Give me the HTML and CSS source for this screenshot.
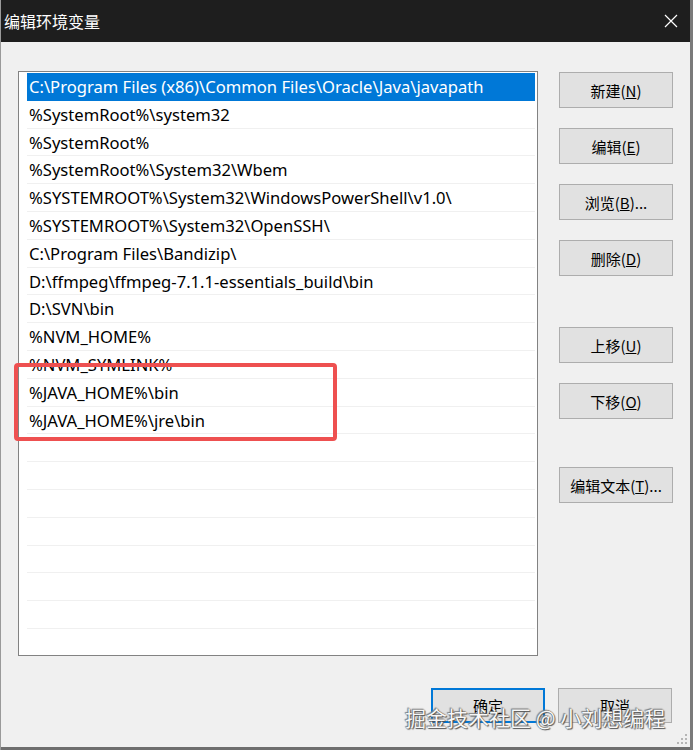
FILE: index.html
```html
<!DOCTYPE html>
<html lang="zh-CN">
  <head>
    <meta charset="UTF-8" />
    <meta name="viewport" content="width=device-width, initial-scale=1.0" />
    <title>编辑环境变量</title>
    <link rel="stylesheet" href="styles.css">
  </head>
  <body>
    <div class="window">
      <div class="titlebar">
        <span class="title">编辑环境变量</span>
        <span class="close">
          <svg width="14" height="14" viewBox="0 0 14 14">
            <path d="M1 1 L13 13 M13 1 L1 13" stroke="#fff" stroke-width="1.2" fill="none" />
          </svg>
        </span>
      </div>
      <div class="content">
        <div class="main">
          <div class="list">
            <div class="row selected">C:\Program Files (x86)\Common Files\Oracle\Java\javapath</div>
            <div class="row">%SystemRoot%\system32</div>
            <div class="row">%SystemRoot%</div>
            <div class="row">%SystemRoot%\System32\Wbem</div>
            <div class="row">%SYSTEMROOT%\System32\WindowsPowerShell\v1.0\</div>
            <div class="row">%SYSTEMROOT%\System32\OpenSSH\</div>
            <div class="row">C:\Program Files\Bandizip\</div>
            <div class="row">D:\ffmpeg\ffmpeg-7.1.1-essentials_build\bin</div>
            <div class="row">D:\SVN\bin</div>
            <div class="row">%NVM_HOME%</div>
            <div class="row">%NVM_SYMLINK%</div>
            <div class="row">%JAVA_HOME%\bin</div>
            <div class="row">%JAVA_HOME%\jre\bin</div>
            <div class="row"></div>
            <div class="row"></div>
            <div class="row"></div>
            <div class="row"></div>
            <div class="row"></div>
            <div class="row"></div>
            <div class="row"></div>
          </div>
          <div class="side">
            <div class="group">
              <button class="btn">新建(<u>N</u>)</button>
              <button class="btn">编辑(<u>E</u>)</button>
              <button class="btn">浏览(<u>B</u>)...</button>
              <button class="btn">删除(<u>D</u>)</button>
            </div>
            <div class="group move">
              <button class="btn">上移(<u>U</u>)</button>
              <button class="btn">下移(<u>O</u>)</button>
            </div>
            <div class="group text">
              <button class="btn">编辑文本(<u>T</u>)...</button>
            </div>
          </div>
        </div>
        <div class="footer">
          <button class="btn default">确定</button>
          <button class="btn">取消</button>
        </div>

        <!-- marker round the java entries -->
        <div class="mark"></div>
        <div class="grip">
          <svg width="10" height="10" viewBox="0 0 10 10" fill="#b5b5b5">
            <rect x="8" y="0" width="2" height="2" />
            <rect x="4" y="4" width="2" height="2" />
            <rect x="8" y="4" width="2" height="2" />
            <rect x="0" y="8" width="2" height="2" />
            <rect x="4" y="8" width="2" height="2" />
            <rect x="8" y="8" width="2" height="2" />
          </svg>
        </div>
        <div class="watermark">掘金技术社区 @ 小刘想编程</div>
      </div>
    </div>
  </body>
</html>
```

FILE: styles.css
```css
* {
  margin: 0;
  padding: 0;
  box-sizing: border-box;
}
body {
  background: #f0f0f0;
  font-family: "Noto Sans", "Noto Sans CJK SC", sans-serif;
  color: #000;
}
.window {
  width: 693px;
  height: 750px;
  border-right: 3px solid #7a7a7a;
  border-left: 1px solid #9a9a9a;
  display: flex;
  flex-direction: column;
  overflow: hidden;
}
.titlebar {
  height: 42px;
  background: #1e1e1e;
  color: #fff;
  display: flex;
  align-items: center;
  justify-content: space-between;
  padding: 0 12px 0 3px;
}
.title {
  font-family: "Noto Sans CJK SC", sans-serif;
  font-size: 16px;
}
.close {
  display: flex;
}
.content {
  position: relative;
  flex: 1;
  padding: 29px 17px 0 17px;
  border-bottom: 3px solid #6e6e6e;
}
.main {
  display: flex;
  gap: 21px;
}
.list {
  width: 520px;
  height: 585px;
  background: #fff;
  border: 1px solid #828282;
  padding: 1px 1px 0 8px;
  overflow: hidden;
}
.row {
  height: 27.8px;
  line-height: 27px;
  border-bottom: 1px solid #f0f0f0;
  font-size: 16.6px;
  padding-left: 2px;
  white-space: nowrap;
  margin-right: 1px;
}
.row.selected {
  background: #0078d7;
  color: #fff;
  border-bottom-color: #0078d7;
}
.side {
  display: flex;
  flex-direction: column;
  padding-top: 1px;
}
.group {
  display: flex;
  flex-direction: column;
  gap: 20px;
}
.move {
  margin-top: 51px;
}
.text {
  margin-top: 48px;
}
.btn {
  width: 114px;
  height: 36px;
  background: #e1e1e1;
  border: 1px solid #adadad;
  font-family: "Noto Sans CJK SC", sans-serif;
  font-size: 15px;
  color: #000;
}
.footer {
  display: flex;
  justify-content: flex-end;
  gap: 13px;
  margin-top: 32px;
  padding-right: 1px;
}
.footer .btn {
  height: 35px;
}
.btn.default {
  border: 2px solid #0078d7;
}
.mark {
  position: absolute;
  left: 13px;
  top: 321px;
  width: 323px;
  height: 78px;
  border: 4px solid #ee5050;
  border-radius: 4px;
}
.grip {
  position: absolute;
  right: 3px;
  bottom: 3px;
  display: flex;
}
.watermark {
  position: absolute;
  left: 404px;
  top: 660px;
  font-family: "Noto Sans CJK SC", sans-serif;
  font-size: 21px;
  color: #f7f7f7;
  text-shadow: 0 0 1px #444, 1px 1px 1px #555, -1px -1px 1px #888;
  white-space: nowrap;
}
```
